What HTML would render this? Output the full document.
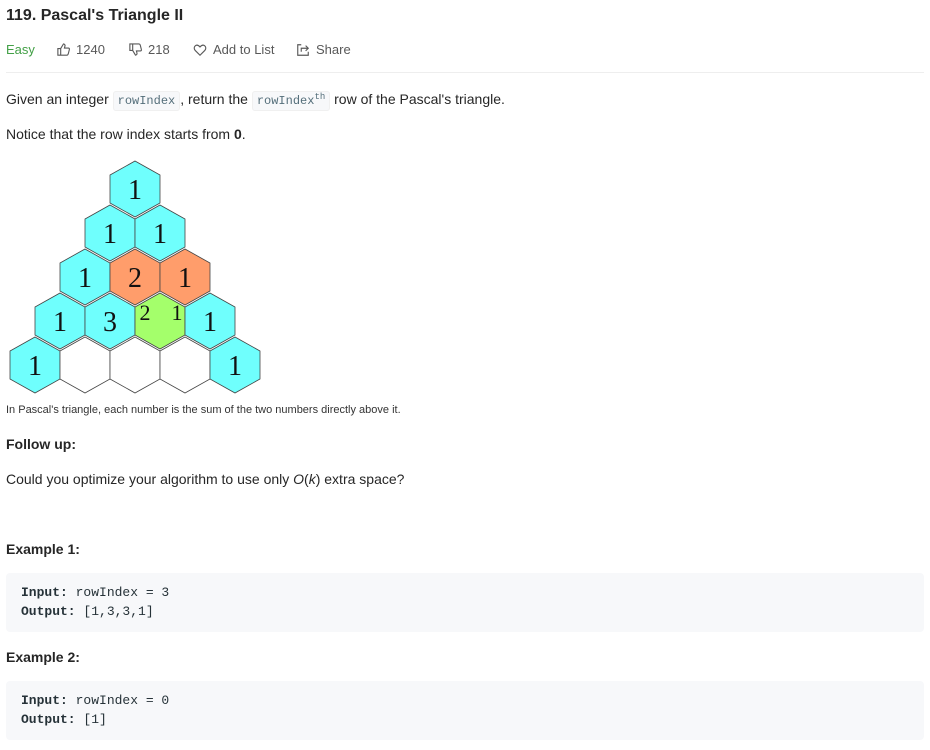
<!DOCTYPE html>
<html><head><meta charset="utf-8"><style>
body{margin:0;width:930px;height:750px;background:#fff;font-family:"Liberation Sans",sans-serif;color:#262626;position:relative;overflow:hidden}
.a{position:absolute;white-space:nowrap}
code{font-family:"Liberation Mono",monospace;font-size:12px;background:#f7f8fa;color:#546e7a;border-radius:3px;padding:2px 4px;border:1px solid #f0f0f0}
.pre{position:absolute;left:6px;width:918px;background:#f7f8fa;border-radius:4px;font-family:"Liberation Mono",monospace;font-size:13px;color:#263238}
.pre div{position:absolute;left:15px}
b{font-weight:bold}
.meta{font-size:13px;color:#595959;top:42px}
</style></head><body>
<div class="a" style="left:6px;top:7px;font-size:16px;font-weight:bold;color:#262626">119. Pascal's Triangle II</div>
<div class="a meta" style="left:6px;color:#43a047">Easy</div>
<svg class="a" style="left:56px;top:42px" width="15" height="15" viewBox="0 0 16 16" fill="none" stroke="#595959" stroke-width="1.2"><path d="M2 7h3v7H2zM5 7l3-5c1 0 2 1 1.5 2.5L9 6.5h4.2c.8 0 1.3.7 1.1 1.4l-1.3 5c-.2.6-.7 1.1-1.4 1.1H5"/></svg>
<div class="a meta" style="left:76px">1240</div>
<svg class="a" style="left:128px;top:42px" width="15" height="15" viewBox="0 0 16 16" fill="none" stroke="#595959" stroke-width="1.2"><path d="M2 2h3v7H2zM5 9l3 5c1 0 2-1 1.5-2.5L9 9.5h4.2c.8 0 1.3-.7 1.1-1.4l-1.3-5C12.8 2.5 12.3 2 11.6 2H5"/></svg>
<div class="a meta" style="left:148px">218</div>
<svg class="a" style="left:193px;top:43px" width="14" height="14" viewBox="0 0 16 16" fill="none" stroke="#595959" stroke-width="1.3"><path d="M8 14L2.5 8.5C1 7 1 4.5 2.6 3.2 4 2 6 2.3 8 4.5 10 2.3 12 2 13.4 3.2 15 4.5 15 7 13.5 8.5z"/></svg>
<div class="a meta" style="left:213px">Add to List</div>
<svg class="a" style="left:296px;top:43px" width="14" height="14" viewBox="0 0 16 16" fill="none" stroke="#595959" stroke-width="1.3"><path d="M6 2H2v12h12v-4M6 10V6h8M11 3l3 3-3 3"/></svg>
<div class="a meta" style="left:316px">Share</div>
<div class="a" style="left:6px;top:72px;width:918px;height:1px;background:#eee"></div>
<div class="a" style="left:6px;top:91px;font-size:14px">Given an integer <code>rowIndex</code>, return the <code>rowIndex<sup style="font-size:9px">th</sup></code> row of the Pascal's triangle.</div>
<div class="a" style="left:6px;top:126px;font-size:14px">Notice that the row index starts from <b>0</b>.</div>
<svg class="a" style="left:0;top:0" width="270" height="400" font-family="Liberation Serif,serif" font-size="28" text-anchor="middle">
<g stroke="#444" stroke-width="0.8">
<polygon fill="#6ffffd" points="135,161 160,175 160,203 135,217 110,203 110,175"/>
<polygon fill="#6ffffd" points="110,205 135,219 135,247 110,261 85,247 85,219"/>
<polygon fill="#6ffffd" points="160,205 185,219 185,247 160,261 135,247 135,219"/>
<polygon fill="#6ffffd" points="85,249 110,263 110,291 85,305 60,291 60,263"/>
<polygon fill="#ff9d6b" points="135,249 160,263 160,291 135,305 110,291 110,263"/>
<polygon fill="#ff9d6b" points="185,249 210,263 210,291 185,305 160,291 160,263"/>
<polygon fill="#6ffffd" points="60,293 85,307 85,335 60,349 35,335 35,307"/>
<polygon fill="#6ffffd" points="110,293 135,307 135,335 110,349 85,335 85,307"/>
<polygon fill="#a4ff6b" points="160,293 185,307 185,335 160,349 135,335 135,307"/>
<polygon fill="#6ffffd" points="210,293 235,307 235,335 210,349 185,335 185,307"/>
<polygon fill="#6ffffd" points="35,337 60,351 60,379 35,393 10,379 10,351"/>
<polygon fill="#fff" points="85,337 110,351 110,379 85,393 60,379 60,351"/>
<polygon fill="#fff" points="135,337 160,351 160,379 135,393 110,379 110,351"/>
<polygon fill="#fff" points="185,337 210,351 210,379 185,393 160,379 160,351"/>
<polygon fill="#6ffffd" points="235,337 260,351 260,379 235,393 210,379 210,351"/>
</g>
<g fill="#111">
<text x="135" y="199">1</text>
<text x="110" y="243">1</text><text x="160" y="243">1</text>
<text x="85" y="287">1</text><text x="135" y="287">2</text><text x="185" y="287">1</text>
<text x="60" y="331">1</text><text x="110" y="331">3</text><text x="210" y="331">1</text>
<text x="145" y="320" font-size="22">2</text><text x="177" y="320" font-size="22">1</text>
<text x="35" y="375">1</text><text x="235" y="375">1</text>
</g></svg>
<div class="a" style="left:6px;top:404px;font-size:11px;color:#333">In Pascal's triangle, each number is the sum of the two numbers directly above it.</div>
<div class="a" style="left:6px;top:436px;font-size:14px;font-weight:bold">Follow up:</div>
<div class="a" style="left:6px;top:471px;font-size:14px">Could you optimize your algorithm to use only <i>O</i>(<i>k</i>) extra space?</div>
<div class="a" style="left:6px;top:541px;font-size:14px;font-weight:bold">Example 1:</div>
<div class="pre" style="top:573px;height:59px"><div style="top:12px"><b>Input:</b> rowIndex = 3</div><div style="top:31px"><b>Output:</b> [1,3,3,1]</div></div>
<div class="a" style="left:6px;top:649px;font-size:14px;font-weight:bold">Example 2:</div>
<div class="pre" style="top:681px;height:59px"><div style="top:12px"><b>Input:</b> rowIndex = 0</div><div style="top:31px"><b>Output:</b> [1]</div></div>
</body></html>
